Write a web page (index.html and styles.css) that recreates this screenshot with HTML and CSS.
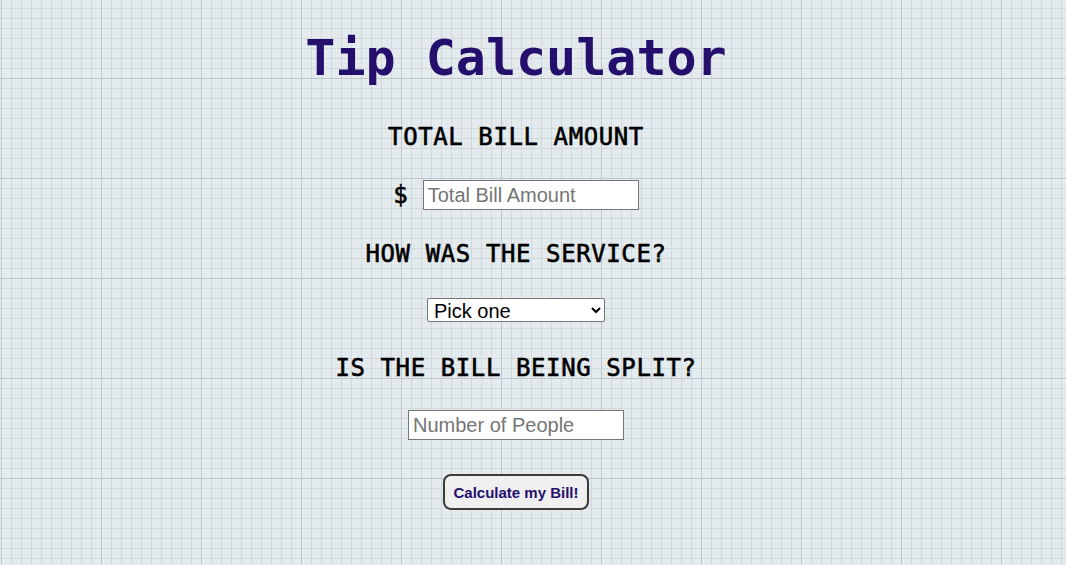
FILE: index.html
```html
<!DOCTYPE html>
<html lang="en">
<head>
<meta charset="utf-8">
<title>Tip Calculator</title>
<link rel="stylesheet" href="styles.css">
</head>
<body>
<main class="page">
  <h1 class="title">Tip Calculator</h1>
  <h2 class="label label-bill">TOTAL BILL AMOUNT</h2>
  <div class="bill-row">
    <span class="dollar">$</span>
    <input class="field" type="text" placeholder="Total Bill Amount">
  </div>
  <h2 class="label label-service">HOW WAS THE SERVICE?</h2>
  <select class="picker">
    <option>Pick one</option>
    <option>30% - Outstanding</option>
    <option>20% - Good</option>
    <option>15% - It was OK</option>
    <option>10% - Bad</option>
    <option>5% - Terrible</option>
  </select>
  <h2 class="label label-split">IS THE BILL BEING SPLIT?</h2>
  <input class="field people" type="text" placeholder="Number of People">
  <button class="calc" type="button">Calculate my Bill!</button>
</main>
</body>
</html>
```
FILE: styles.css
```css
html {
  min-height: 100%;
  background-color: #e3ebee;
  background-image:
    linear-gradient(to right, #bfc7cb 1px, transparent 1px),
    linear-gradient(to bottom, #bfc7cb 1px, transparent 1px),
    linear-gradient(to right, #d1d9dd 1px, transparent 1px),
    linear-gradient(to bottom, #d1d9dd 1px, transparent 1px);
  background-size: 100px 100px, 100px 100px, 10px 10px, 10px 10px;
  background-position: 1px 78px, 1px 78px, 1px 8px, 1px 8px;
}

body {
  margin: 0;
}

.page {
  width: 1016px;
  margin-left: 8px;
  display: flex;
  flex-direction: column;
  align-items: center;
}

.title {
  margin: 28px 0 0;
  font-family: "DejaVu Sans Mono", monospace;
  font-weight: bold;
  font-size: 50px;
  line-height: 60px;
  color: #24106c;
}

.label {
  margin: 0;
  font-family: "DejaVu Sans Mono", monospace;
  font-weight: normal;
  font-size: 24px;
  letter-spacing: 0.6px;
  line-height: 30px;
  color: #000;
  -webkit-text-stroke: 0.6px #000;
}

.label-bill { margin-top: 34px; }
.label-service { margin-top: 29px; }
.label-split { margin-top: 31px; }

.bill-row {
  margin-top: 28px;
  display: flex;
  align-items: center;
  gap: 15px;
}

.dollar {
  font-family: "DejaVu Sans Mono", monospace;
  font-size: 24px;
  line-height: 30px;
  color: #000;
  -webkit-text-stroke: 0.6px #000;
}

.field {
  box-sizing: border-box;
  width: 216px;
  height: 30px;
  margin: 0;
  padding: 1px 4px;
  border: 1px solid #767676;
  border-radius: 0;
  background: #fff;
  font-family: "Liberation Sans", Arial, sans-serif;
  font-size: 20px;
  color: #000;
}

.field::placeholder {
  color: #757575;
}

.people {
  margin-top: 27px;
}

.picker {
  box-sizing: border-box;
  width: 178px;
  height: 24px;
  margin-top: 29px;
  padding: 0 0 0 2px;
  border: 1px solid #767676;
  border-radius: 2px;
  background: #fff;
  font-family: "Liberation Sans", Arial, sans-serif;
  font-size: 20px;
  color: #000;
}

.calc {
  box-sizing: border-box;
  width: 146px;
  height: 36px;
  margin-top: 34px;
  padding: 0;
  border: 2px solid #3a3a3a;
  border-radius: 8px;
  background: #efefef;
  font-family: "Liberation Sans", Arial, sans-serif;
  font-weight: bold;
  font-size: 15px;
  color: #24106c;
}
```
